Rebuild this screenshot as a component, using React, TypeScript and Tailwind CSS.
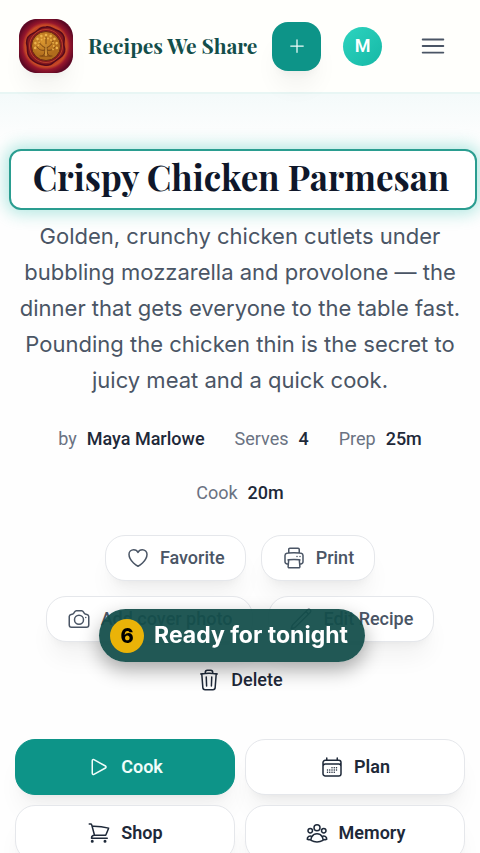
import React from 'react';
import type { IconType } from 'react-icons';
import {
  HiOutlineBars3,
  HiOutlineCalendarDays,
  HiOutlineCamera,
  HiOutlineHeart,
  HiOutlinePencil,
  HiOutlinePlay,
  HiOutlinePlus,
  HiOutlinePrinter,
  HiOutlineShoppingCart,
  HiOutlineTrash,
  HiOutlineUserGroup,
} from 'react-icons/hi2';

const recipe = {
  title: 'Crispy Chicken Parmesan',
  description:
    'Golden, crunchy chicken cutlets under bubbling mozzarella and provolone — the dinner that gets everyone to the table fast. Pounding the chicken thin is the secret to juicy meat and a quick cook.',
  meta: [
    { label: 'by', value: 'Maya Marlowe' },
    { label: 'Serves', value: '4' },
    { label: 'Prep', value: '25m' },
    { label: 'Cook', value: '20m' },
  ],
};

const leaves = [-100, -75, -50, -25, 0, 25, 50, 75, 100];

const SealLogo: React.FC = () => (
  <svg viewBox="0 0 54 54" className="size-[54px] shrink-0 rounded-[18px] shadow-xl shadow-black/5" aria-hidden="true">
    <defs>
      <radialGradient id="wax">
        <stop offset="0.6" stopColor="#b8351f" />
        <stop offset="0.72" stopColor="#c84a26" />
        <stop offset="0.82" stopColor="#96162c" />
        <stop offset="1" stopColor="#5e0824" />
      </radialGradient>
      <radialGradient id="gold" cx="0.4" cy="0.35">
        <stop offset="0" stopColor="#d9962f" />
        <stop offset="1" stopColor="#b06c1c" />
      </radialGradient>
    </defs>
    <rect width="54" height="54" fill="#5e0824" />
    <circle cx="27" cy="27" r="29" fill="url(#wax)" />
    <path
      d="M27 8c4-1 7 2 10 3s7 3 8 7-1 6 0 9 1 7-2 10-5 3-8 6-6 4-10 3-6-1-9-3-6-4-7-8 0-6-1-9 0-8 3-10 5-2 8-5 5-3 8-3z"
      fill="#861820"
      stroke="#560a1a"
      strokeWidth="1.5"
    />
    <circle cx="27" cy="27" r="16.5" fill="none" stroke="#b8402a" strokeWidth="1" />
    <circle cx="27" cy="27" r="14.5" fill="url(#gold)" stroke="#6b2a10" />
    <g fill="none" stroke="#7a4512" strokeWidth="1" strokeLinecap="round">
      <path d="M23 37c3-1 3-4 3-8M31 37c-3-1-3-4-3-8M21 37h12" />
      <path d="M27 30V18M27 29c-3-1-6-3-7-7M27 29c3-1 6-3 7-7M26 31c-3 1-6 0-8-3M28 31c3 1 6 0 8-3" />
    </g>
    {leaves.map((angle) => (
      <g key={angle} transform={`rotate(${angle} 27 27)`} fill="#ecb44c">
        <circle cx="27" cy="16" r="1.3" />
        <circle cx="29" cy="19.5" r="0.9" />
      </g>
    ))}
    <path d="M26.4 37l.2-12h.8l.2 12z" fill="#ecb44c" />
  </svg>
);

interface ButtonProps {
  icon: IconType;
  label: string;
  className?: string;
}

const ActionButton: React.FC<ButtonProps> = ({ icon: Icon, label, className = '' }) => (
  <button
    className={`flex h-[46px] items-center gap-2.5 rounded-[20px] border px-5 text-lg font-medium ${className}`}
  >
    <Icon className="size-6" />
    {label}
  </button>
);

const TaskButton: React.FC<ButtonProps> = ({ icon: Icon, label, className = '' }) => (
  <button
    className={`flex h-14 items-center justify-center gap-2.5 rounded-[20px] border text-lg font-semibold shadow-xl shadow-black/5 ${className}`}
  >
    <Icon className="size-6" />
    {label}
  </button>
);

const outlined = 'border-gray-200 bg-white text-gray-600 shadow-xl shadow-black/5';

export default function App() {
  return (
    <div className="min-h-screen overflow-x-hidden bg-[#fefefe] font-['Roboto',sans-serif]">
      <header className="flex h-[94px] items-center border-b-2 border-[#e8f6f4] bg-[#fffffc] pr-8 pl-[19px]">
        <a href="#" className="flex items-center gap-[15px]">
          <SealLogo />
          <span className="font-['Playfair_Display','Liberation_Serif',serif] text-[21px] font-bold whitespace-nowrap text-[#134e4a]">
            Recipes We Share
          </span>
        </a>
        <div className="ml-auto flex items-center">
          <button
            aria-label="Add recipe"
            className="flex size-[49px] items-center justify-center rounded-2xl bg-[#0d9488] text-teal-50 shadow-xl shadow-black/5"
          >
            <HiOutlinePlus className="size-5" />
          </button>
          <button
            aria-label="Account"
            className="ml-[22px] size-[39px] rounded-full bg-linear-to-br from-[#2dd4bf] to-[#14b8a6] text-lg font-semibold text-white"
          >
            M
          </button>
          <button aria-label="Menu" className="ml-9 text-gray-600">
            <HiOutlineBars3 className="size-[30px]" />
          </button>
        </div>
      </header>

      <main className="bg-linear-to-b from-[#f4fafa] to-transparent to-[48px] pt-[55px] pb-8">
        <h1 className="mr-[3px] ml-[9px] flex h-[61px] items-center justify-center rounded-xl border-2 border-[#2a9d90] bg-white pr-1 pb-1 font-['Playfair_Display','Liberation_Serif',serif] text-[35px] font-bold whitespace-nowrap text-[#0f172a] shadow-[0_0_16px_4px_#14b8a650]">
          {recipe.title}
        </h1>

        <p className="mt-2 px-4 text-center font-['Inter',sans-serif] text-[22px] leading-9 text-gray-600">
          {recipe.description}
        </p>

        <ul className="mt-[29px] flex flex-wrap justify-center gap-x-[30px] gap-y-[30px] px-4 text-lg leading-6">
          {recipe.meta.map((item) => (
            <li key={item.label} className="flex gap-2.5 text-gray-500">
              {item.label}
              <span className="font-medium text-gray-800">{item.value}</span>
            </li>
          ))}
        </ul>

        <div className="mt-[30px] flex flex-wrap justify-center gap-[15px] px-4">
          <ActionButton icon={HiOutlineHeart} label="Favorite" className={outlined} />
          <ActionButton icon={HiOutlinePrinter} label="Print" className={outlined} />
          <ActionButton icon={HiOutlineCamera} label="Add cover photo" className={outlined} />
          <ActionButton icon={HiOutlinePencil} label="Edit Recipe" className={outlined} />
          <ActionButton icon={HiOutlineTrash} label="Delete" className="border-transparent text-gray-800" />
        </div>

        <div className="mt-9 grid grid-cols-2 gap-2.5 px-[15px]">
          <TaskButton icon={HiOutlinePlay} label="Cook" className="border-[#0d9488] bg-[#0d9488] text-teal-50" />
          <TaskButton icon={HiOutlineCalendarDays} label="Plan" className="border-gray-200 bg-white text-gray-800" />
          <TaskButton icon={HiOutlineShoppingCart} label="Shop" className="border-gray-200 bg-white text-gray-800" />
          <TaskButton icon={HiOutlineUserGroup} label="Memory" className="border-gray-200 bg-white text-gray-800" />
        </div>
      </main>

      {/* Step callout */}
      <div className="pointer-events-none fixed inset-x-0 bottom-[191px] flex justify-center pr-4">
        <div className="flex h-[53px] items-center gap-2.5 rounded-full bg-[#134e4a]/94 pr-[17px] pl-[11px] font-['Inter',sans-serif] text-[23px] font-bold whitespace-nowrap text-white shadow-[0_8px_20px_#00000055]">
          <span className="flex size-[34px] items-center justify-center rounded-full bg-[#eab308] text-xl font-extrabold text-black">
            6
          </span>
          Ready for tonight
        </div>
      </div>
    </div>
  );
}
